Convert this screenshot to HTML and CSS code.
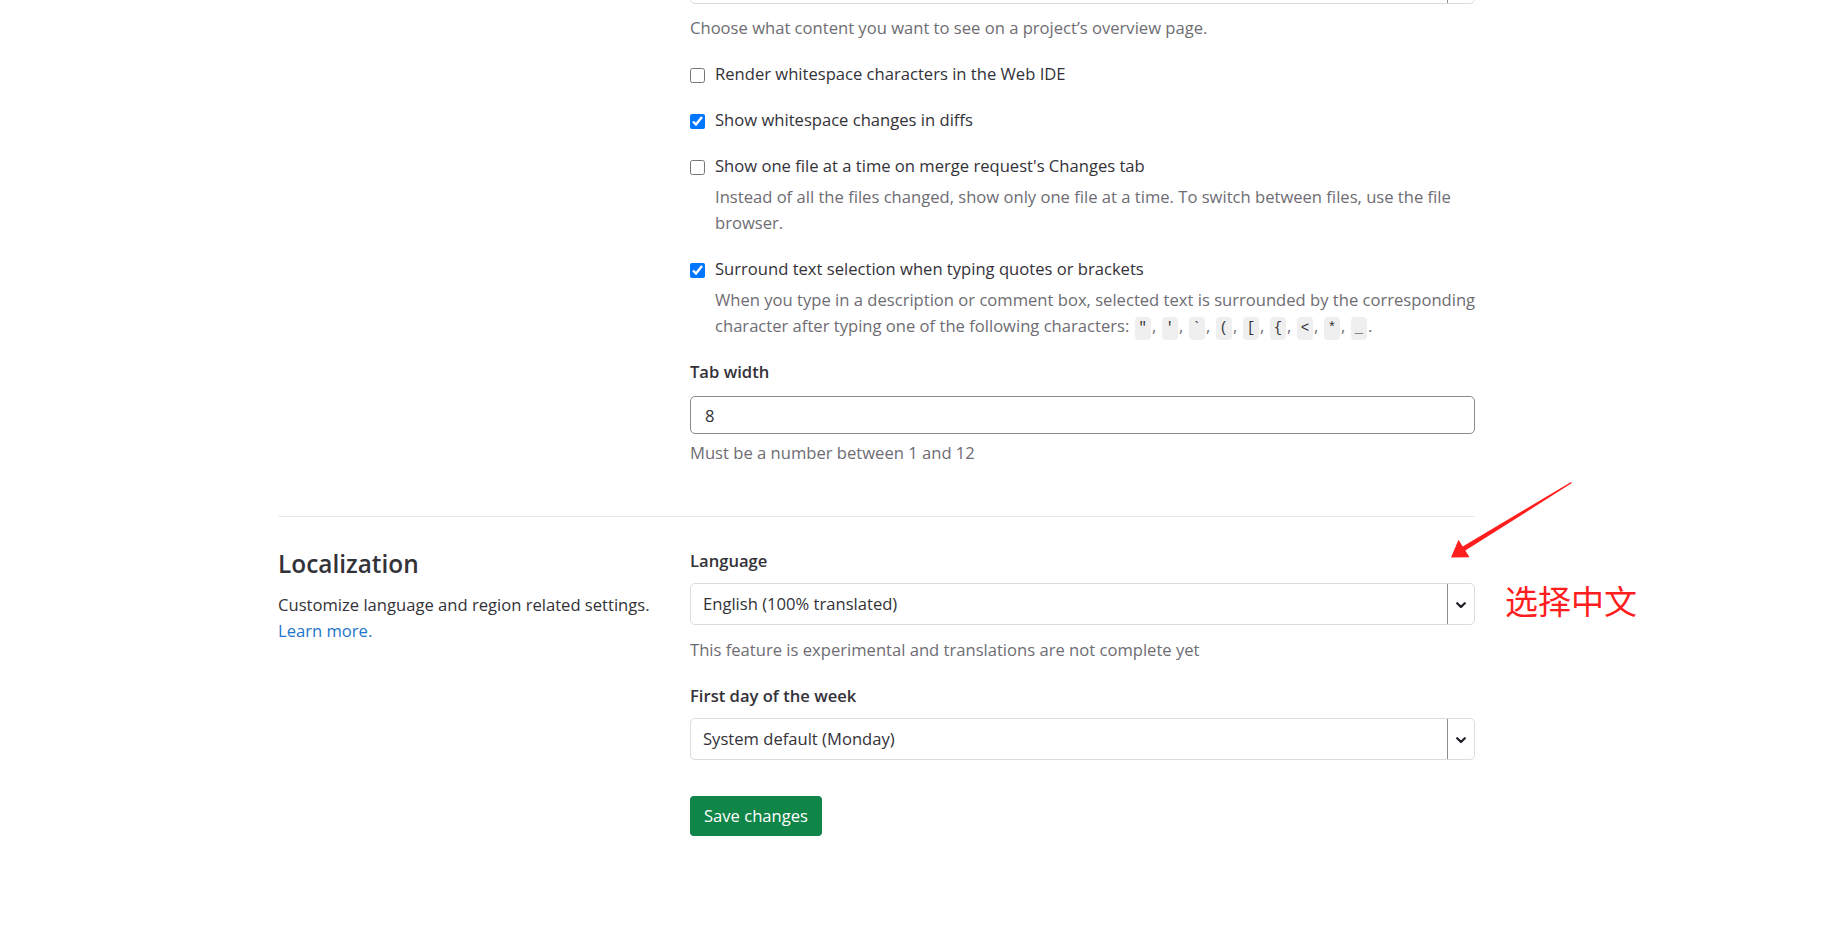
FILE: index.html
```html
<!DOCTYPE html>
<html lang="en">
<head>
<meta charset="utf-8">
<title>Preferences</title>
<link rel="stylesheet" href="styles.css">
</head>
<body>
<div class="page">
  <section class="settings-section">
    <div class="section-intro"></div>
    <div class="section-body">
      <div class="select-box top-select">
        <div class="select-text"></div>
        <div class="select-caret"><svg width="10" height="7" viewBox="0 0 10 7"><path d="M1.2 1.2 L5 5 L8.8 1.2" fill="none" stroke="#1f1e24" stroke-width="2.2" stroke-linecap="round" stroke-linejoin="round"/></svg></div>
      </div>
      <p class="help first-help">Choose what content you want to see on a project’s overview page.</p>

      <div class="check-group">
        <label class="check-row"><input type="checkbox" class="check"><span>Render whitespace characters in the Web IDE</span></label>
      </div>
      <div class="check-group">
        <label class="check-row"><input type="checkbox" class="check" checked><span>Show whitespace changes in diffs</span></label>
      </div>
      <div class="check-group">
        <label class="check-row"><input type="checkbox" class="check"><span>Show one file at a time on merge request's Changes tab</span></label>
        <p class="help check-help"><span class="line">Instead of all the files changed, show only one file at a time. To switch between files, use the file</span> <span class="line">browser.</span></p>
      </div>
      <div class="check-group">
        <label class="check-row"><input type="checkbox" class="check" checked><span>Surround text selection when typing quotes or brackets</span></label>
        <p class="help check-help"><span class="line">When you type in a description or comment box, selected text is surrounded by the corresponding</span> <span class="line">character after typing one of the following characters: <code class="chip">"</code>, <code class="chip">'</code>, <code class="chip">`</code>, <code class="chip">(</code>, <code class="chip">[</code>, <code class="chip">{</code>, <code class="chip">&lt;</code>, <code class="chip">*</code>, <code class="chip">_</code>.</span></p>
      </div>

      <div class="form-group">
        <label class="field-label" for="tab-width">Tab width</label>
        <input id="tab-width" class="text-input" type="text" value="8">
        <p class="help field-help">Must be a number between 1 and 12</p>
      </div>
    </div>
  </section>

  <hr class="divider">

  <section class="settings-section loc-section">
    <div class="section-intro">
      <h2 class="section-title">Localization</h2>
      <p class="intro-text">Customize language and region related settings. <a class="link" href="#">Learn more.</a></p>
    </div>
    <div class="section-body">
      <div class="form-group">
        <div class="field-label">Language</div>
        <div class="select-box">
          <div class="select-text">English (100% translated)</div>
          <div class="select-caret"><svg width="10" height="7" viewBox="0 0 10 7"><path d="M1.2 1.2 L5 5 L8.8 1.2" fill="none" stroke="#1f1e24" stroke-width="2.2" stroke-linecap="round" stroke-linejoin="round"/></svg></div>
        </div>
        <p class="help select-help">This feature is experimental and translations are not complete yet</p>
      </div>
      <div class="form-group">
        <div class="field-label">First day of the week</div>
        <div class="select-box">
          <div class="select-text">System default (Monday)</div>
          <div class="select-caret"><svg width="10" height="7" viewBox="0 0 10 7"><path d="M1.2 1.2 L5 5 L8.8 1.2" fill="none" stroke="#1f1e24" stroke-width="2.2" stroke-linecap="round" stroke-linejoin="round"/></svg></div>
        </div>
      </div>
      <button class="save-btn" type="button">Save changes</button>
    </div>
  </section>
</div>

<div class="annotation">
  <svg class="annotation-arrow" width="1831" height="927" viewBox="0 0 1831 927">
    <polygon fill="#ff1e1e" points="1571.9,483.1 1571.1,481.9 1462.7,546.4 1458.5,539.8 1451,557.5 1469.5,557.2 1465.3,550.6"/>
  </svg>
  <div class="annotation-text">选择中文</div>
</div>
</body>
</html>
```

FILE: styles.css
```css
* { box-sizing: border-box; }

html, body {
  margin: 0;
  padding: 0;
  background: #ffffff;
}

body {
  font-family: "Segoe UI", "Open Sans", "Noto Sans", sans-serif;
  font-size: 16.6px;
  line-height: 26px;
  color: #333238;
  overflow: hidden;
}

.page {
  width: 1197px;
  margin-left: 278px;
}

.settings-section {
  display: grid;
  grid-template-columns: 412px 785px;
}

.section-body {
  min-width: 0;
}

p { margin: 0; }

.help {
  color: #6e6d73;
}

.line {
  display: block;
  height: 26px;
  white-space: nowrap;
}

/* select boxes */
.select-box {
  display: flex;
  height: 42px;
  border: 1px solid #dcdcde;
  border-radius: 5px;
  background: #fff;
}

.top-select {
  margin-top: -38px;
}

.select-text {
  flex: 1;
  display: flex;
  align-items: center;
  padding-left: 12px;
  color: #333238;
}

.select-caret {
  width: 27px;
  border-left: 1px solid #8d8c92;
  display: flex;
  align-items: center;
  justify-content: center;
  padding-top: 2px;
}

.first-help {
  margin-top: 11px;
}

/* checkboxes */
.check-group {
  margin-top: 20px;
}

.check-row {
  display: flex;
  align-items: center;
  gap: 10px;
  line-height: 26px;
}

.check {
  width: 15px;
  height: 15px;
  margin: 2px 0 0 0;
  flex: none;
}

.check-help {
  margin-top: 5px;
  padding-left: 25px;
}

.chip {
  display: inline-block;
  height: 23px;
  line-height: 23px;
  padding: 0 4px;
  margin: 0 1px;
  border-radius: 4px;
  background: #efefef;
  font-family: "Liberation Mono", "DejaVu Sans Mono", monospace;
  font-size: 14px;
  color: #333238;
  vertical-align: baseline;
}

/* fields */
.form-group {
  margin-top: 20px;
}

.field-label {
  display: block;
  font-weight: 600;
  line-height: 26px;
  color: #333238;
}

.text-input {
  display: block;
  width: 100%;
  height: 38px;
  margin-top: 11px;
  padding: 0 14px;
  border: 1px solid #89888d;
  border-radius: 5px;
  font: inherit;
  color: #333238;
  background: #fff;
  outline: none;
}

.field-help {
  margin-top: 6px;
}

.divider {
  margin: 50px 0 0 0;
  border: 0;
  border-top: 1px solid #e9e9eb;
}

/* localization */
.loc-section {
  padding-top: 31px;
}

.loc-section .form-group:first-child {
  margin-top: 0;
}

.loc-section .select-box {
  margin-top: 9px;
}

.select-help {
  margin-top: 12px;
}

.section-title {
  margin: 0;
  font-size: 24.4px;
  line-height: 32px;
  font-weight: 600;
  color: #333238;
}

.intro-text {
  margin-top: 12px;
  padding-right: 20px;
}

.link {
  color: #1f75cb;
  text-decoration: none;
}

.save-btn {
  display: block;
  margin-top: 36px;
  height: 40px;
  padding: 0 14px;
  border: 0;
  border-radius: 4px;
  background: #108548;
  color: #ffffff;
  font: inherit;
  cursor: pointer;
}

/* annotation overlay */
.annotation {
  position: absolute;
  left: 0;
  top: 0;
  width: 1831px;
  height: 927px;
  pointer-events: none;
}

.annotation-arrow {
  position: absolute;
  left: 0;
  top: 0;
}

.annotation-text {
  position: absolute;
  left: 1505px;
  top: 584px;
  font-family: "Noto Sans CJK SC", sans-serif;
  font-size: 33px;
  line-height: 33px;
  color: #ff1e1e;
}
```
